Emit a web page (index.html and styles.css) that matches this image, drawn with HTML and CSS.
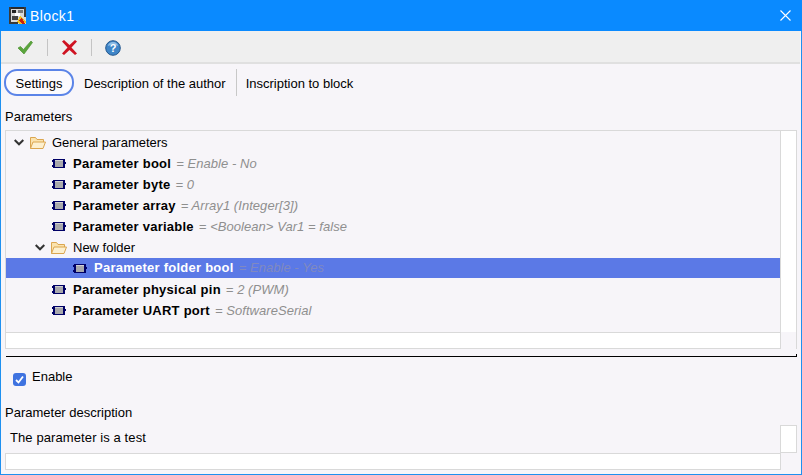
FILE: index.html
```html
<!DOCTYPE html>
<html lang="en">
<head>
<meta charset="utf-8">
<title>Block1</title>
<link rel="stylesheet" href="styles.css">
</head>
<body>
<svg class="sprites" width="0" height="0" aria-hidden="true">
  <defs>
    <symbol id="pin" viewBox="0 0 14 9">
      <rect x="1" y="0" width="12" height="9" fill="#000066"/>
      <rect x="0" y="1" width="2" height="2" fill="#000066"/>
      <rect x="0" y="6" width="2" height="2" fill="#000066"/>
      <rect x="12" y="3" width="2" height="2" fill="#000066"/>
      <rect x="3" y="1" width="8" height="7" fill="#a8a8ac"/>
      <rect x="3" y="1" width="8" height="1" fill="#d0d0d4"/>
    </symbol>
    <symbol id="folder" viewBox="0 0 16 14">
      <path d="M.5 12.5V1.5h5l1.5 2h6.500v2.500" fill="#fbe3ae" stroke="#dba650"/>
      <path d="M.5 12.500 3 6h12.500l-2.500 6.500z" fill="#fdf0cf" stroke="#dba650"/>
    </symbol>
    <symbol id="chev" viewBox="0 0 10 7">
      <path d="M.7 1l4.300 4.300L9.300 1" fill="none" stroke="#333" stroke-width="2"/>
    </symbol>
  </defs>
</svg>
<main class="window">
  <header class="titlebar">
    <svg class="appicon" width="17" height="17" viewBox="0 0 17 17" shape-rendering="crispEdges">
      <rect width="17" height="17" fill="#d8d8d8"/>
      <rect x="0" y="0" width="17" height="2" fill="#2a2a2a"/>
      <rect x="0" y="0" width="2" height="17" fill="#3a3a3a"/>
      <rect x="15" y="0" width="2" height="10" fill="#3a3a3a"/>
      <rect x="0" y="15" width="9" height="2" fill="#3a3a3a"/>
      <rect x="3" y="3" width="4" height="3" fill="#222"/>
      <rect x="9" y="3" width="5" height="3" fill="#777"/>
      <rect x="3" y="9" width="6" height="4" fill="#444"/>
      <rect x="6" y="6" width="5" height="3" fill="#fff"/>
      <path d="M8 15l3-6 2 1 4 5-2 2h-5z" fill="#f0c020"/>
      <path d="M10 13l3 4h3l-3-6z" fill="#c82010"/>
    </svg>
    <h1 class="title">Block1</h1>
    <svg class="close" width="11" height="11" viewBox="0 0 11 11"><path d="M.5.5l10 10M10.500.5l-10 10" stroke="#fff" stroke-width="1.100" fill="none"/></svg>
  </header>

  <div class="toolbar">
    <button class="tool" aria-label="OK"><svg width="17" height="15" viewBox="0 0 17 15"><path d="M1 8l2.500-1.500 3 3L14 1l1.500 1.500L7 14z" fill="#5aa53c" stroke="#4d9432" stroke-width=".7"/></svg></button>
    <span class="sep"></span>
    <button class="tool" aria-label="Cancel"><svg width="17" height="17" viewBox="0 0 17 16"><path d="M1 2l2-1.500 5.500 5 5.500-5 2 1.500-5.500 6 5.500 6-2 1.500-5.500-5-5.500 5-2-1.500 5.500-6z" fill="#cf1322"/></svg></button>
    <span class="sep"></span>
    <button class="tool tool-help" aria-label="Help"><svg width="16" height="16" viewBox="0 0 16 16"><circle cx="8" cy="8" r="7.300" fill="#3f86c8" stroke="#24588f"/><path d="M3 6a5 4 0 0 1 10 0 8 6 0 0 0-10 0z" fill="#8fbde6"/><text x="8" y="12" class="helpq">?</text></svg></button>
  </div>

  <nav class="tabs">
    <span class="tab tab-active">Settings</span>
    <span class="tab tab-line">Description of the author</span>
    <span class="tab">Inscription to block</span>
  </nav>

  <div class="label label-params">Parameters</div>

  <section class="pane pane-tree">
    <div class="pane-body">
      <ul class="tree">
        <li class="row lvl0"><svg class="chev"><use href="#chev"/></svg><svg class="folder"><use href="#folder"/></svg><span>General parameters</span></li>
        <li class="row lvl1"><svg class="pin"><use href="#pin"/></svg><b>Parameter bool</b><i>= Enable - No</i></li>
        <li class="row lvl1"><svg class="pin"><use href="#pin"/></svg><b>Parameter byte</b><i>= 0</i></li>
        <li class="row lvl1"><svg class="pin"><use href="#pin"/></svg><b>Parameter array</b><i>= Array1 (Integer[3])</i></li>
        <li class="row lvl1"><svg class="pin"><use href="#pin"/></svg><b>Parameter variable</b><i>= &lt;Boolean&gt; Var1 = false</i></li>
        <li class="row lvl1f"><svg class="chev"><use href="#chev"/></svg><svg class="folder"><use href="#folder"/></svg><span>New folder</span></li>
        <li class="row lvl2 selected"><svg class="pin"><use href="#pin"/></svg><b>Parameter folder bool</b><i>= Enable - Yes</i></li>
        <li class="row lvl1"><svg class="pin"><use href="#pin"/></svg><b>Parameter physical pin</b><i>= 2 (PWM)</i></li>
        <li class="row lvl1"><svg class="pin"><use href="#pin"/></svg><b>Parameter UART port</b><i>= SoftwareSerial</i></li>
      </ul>
      <div class="vscroll"></div>
    </div>
    <div class="hscroll"></div>
  </section>

  <div class="splitter"></div>

  <label class="check"><span class="box"><svg width="13" height="13" viewBox="0 0 13 13"><path d="M3 7l2.500 2.500L10 3.500" fill="none" stroke="#fff" stroke-width="1.800"/></svg></span><span class="check-text">Enable</span></label>

  <div class="label label-desc">Parameter description</div>

  <section class="pane pane-desc">
    <div class="pane-body">
      <p class="desc">The parameter is a test</p>
      <div class="vscroll vscroll-short"></div>
    </div>
    <div class="hscroll"></div>
  </section>
</main>
</body>
</html>
```
FILE: styles.css
```css
* { box-sizing: border-box; }
html, body { margin: 0; padding: 0; }
body {
  width: 802px;
  height: 475px;
  overflow: hidden;
  font: 13px/16px "Liberation Sans", Arial, sans-serif;
  letter-spacing: 0;
  color: #000;
}
.sprites { position: absolute; }
.window {
  width: 802px;
  height: 475px;
  display: flex;
  flex-direction: column;
  background: #f7f5f9;
  border: solid #1e90f0;
  border-width: 0 1px 1px;
}
.titlebar {
  height: 31px;
  flex: none;
  margin: 0 -1px;
  padding: 0 11px 0 9px;
  display: flex;
  align-items: center;
  background: #0a8aff;
  color: #fff;
}
.appicon { flex: none; }
.title {
  margin: 0 0 0 4px;
  flex: 1;
  font-size: 14px;
  font-weight: 400;
  letter-spacing: .4px;
}
.close { flex: none; }
.toolbar {
  height: 33px;
  flex: none;
  display: flex;
  align-items: center;
  padding: 2px 0 0 16px;
  background: #efefef;
  border-bottom: 2px solid #e0e0e0;
  margin-right: 1px;
}
.tool {
  all: unset;
  display: flex;
  width: 17px;
  height: 17px;
  align-items: center;
  justify-content: center;
}
.tool-help { justify-content: flex-start; }
.sep {
  width: 1px;
  height: 17px;
  margin: 0 13px;
  background: #c4c4c4;
}
.helpq { font: bold 11px "Liberation Sans", sans-serif; fill: #fff; text-anchor: middle; letter-spacing: 0; }
.tabs {
  flex: none;
  height: 33px;
  padding: 5px 0 0 3px;
  display: flex;
  align-items: flex-start;
}
.tab {
  height: 27px;
  display: flex;
  align-items: center;
  padding: 2px 9px 0;
}
.tab-active {
  width: 70px;
  padding: 2px 0 0;
  justify-content: center;
  background: #fbfafd;
  border: 2px solid #5b84e8;
  border-radius: 13px;
  margin-right: 1px;
}
.tab-line { border-right: 1px solid #c8c8c8; padding: 2px 10px 0 9px; }
.label { flex: none; padding-left: 4px; }
.label-params { margin-top: 12px; height: 16px; }
.pane {
  flex: none;
  margin-left: 4px;
  width: 792px;
  display: flex;
  flex-direction: column;
}
.pane-tree { margin-top: 5px; height: 219px; border: solid #d9d9d9; border-width: 1px 1px 0 1px; }
.pane-body { flex: 1; min-height: 0; display: flex; }
.tree {
  flex: 1;
  margin: 0;
  padding: 1px 0 0;
  list-style: none;
  min-width: 0;
}
.vscroll {
  flex: none;
  width: 16px;
  background: #fff;
  border-left: 1px solid #d9d9d9;
}
.hscroll {
  flex: none;
  height: 17px;
  width: 775px;
  background: #fff;
  border: solid #d9d9d9;
  border-width: 1px 1px 1px 0;
}
.row {
  height: 21px;
  display: flex;
  align-items: center;
  white-space: nowrap;
}
.row b { font-weight: 700; letter-spacing: .25px; }
.row i { color: #8f8f8f; margin-left: 5px; letter-spacing: .05px; }
.row span { margin-left: 6px; }
.chev { width: 10px; height: 7px; flex: none; margin-right: 6px; }
.folder { width: 16px; height: 14px; flex: none; }
.pin { width: 14px; height: 9px; flex: none; margin-right: 7px; }
.lvl0 { padding-left: 8px; }
.lvl1 { padding-left: 46px; }
.lvl1f { padding-left: 29px; }
.lvl2 { padding-left: 67px; }
.selected { background: #5b79e6; color: #fff; height: 20px; margin-bottom: 1px; }
.selected i { color: #8089c0; }
.splitter {
  flex: none;
  height: 3px;
  margin: 5px 4px 0 5px;
  border-right: 1px solid #000;
  border-bottom: 1px solid #000;
}
.check {
  flex: none;
  height: 16px;
  margin: 12px 0 0 12px;
  display: flex;
}
.box {
  width: 13px;
  height: 13px;
  margin-top: 4px;
  border-radius: 3px;
  background: #3f73e0;
  display: flex;
}
.check-text { margin-left: 6px; }
.label-desc { margin-top: 20px; height: 16px; }
.pane-desc { flex: 1; min-height: 0; margin-bottom: 4px; }
.desc { flex: 1; margin: 9px 0 0 5px; letter-spacing: .1px; }
.vscroll-short {
  border: 1px solid #d9d9d9;
  width: 17px;
  height: 28px;
  margin-top: 4px;
}
.pane-desc .hscroll { border-width: 1px 1px 1px 1px; width: 776px; }
```
